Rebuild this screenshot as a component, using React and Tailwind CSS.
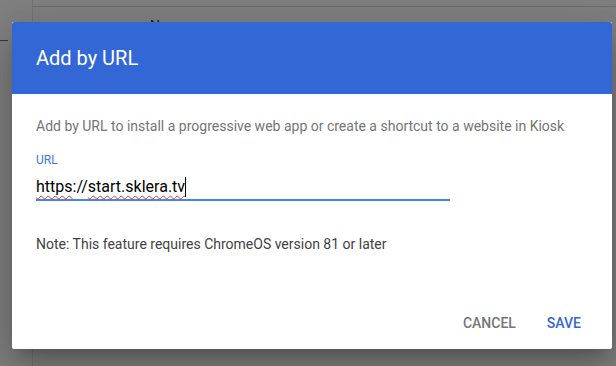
import { useState } from "react";

const AddUrlDialog = () => {
  const [url] = useState("https://start.sklera.tv");

  return (
    <div className="absolute left-[12px] top-[22px] w-[600px] h-[327px] bg-white rounded-[2px] shadow-[0_11px_15px_-7px_rgba(0,0,0,0.2),0_24px_38px_3px_rgba(0,0,0,0.14),0_9px_46px_8px_rgba(0,0,0,0.12)] flex flex-col overflow-hidden">
      <div className="h-[72px] bg-[#3367d6] flex items-center px-6 rounded-t-[2px]">
        <h2 className="text-[20px] text-white leading-6">Add by URL</h2>
      </div>
      <div className="flex-1 flex flex-col px-6 pt-[22px]">
        <p className="text-[14px] leading-5 text-[#757575]">
          Add by URL to install a progressive web app or create a shortcut to a website in Kiosk
        </p>
        <label className="mt-4 text-[12px] leading-4 text-[#3b78e7]">URL</label>
        <div className="mt-[7px] w-[414px] h-[26px] border-b-2 border-[#4285f4] text-[16px] leading-6 text-black flex items-start">
          <span className="underline decoration-wavy decoration-[#e53935] decoration-1 underline-offset-[3px]">https</span>
          <span>://</span>
          <span className="underline decoration-wavy decoration-[#e53935] decoration-1 underline-offset-[3px]">
            {url.replace("https://", "")}
          </span>
          <span className="w-px h-[20px] mt-[2px] bg-black" />
        </div>
        <p className="mt-[33px] text-[14px] leading-5 text-[#424242]">
          Note: This feature requires ChromeOS version 81 or later
        </p>
        <div className="mt-auto -mr-px flex justify-end gap-[15px] pb-2">
          <button className="h-9 px-2 text-[14px] font-medium text-[#757575]">CANCEL</button>
          <button className="h-9 px-2 text-[14px] font-medium text-[#3367d6]">SAVE</button>
        </div>
      </div>
    </div>
  );
};

export default function App() {
  return (
    <div className="relative w-[616px] h-[366px] overflow-hidden bg-[#808080] font-['Roboto',sans-serif]">
      <div className="flex h-full">
        <div className="w-[33px] border-r border-[#737373] flex flex-col">
          <div className="mt-[40px] w-[8px] border-t border-[#3a3a3a]" />
        </div>
        <div className="flex-1 flex flex-col">
          <div className="h-[7px] border-b border-[#6e6e6e]" />
          <div className="pl-[117px] pt-[9px] text-[14px] text-[#111] leading-5">N</div>
        </div>
      </div>
      <AddUrlDialog />
    </div>
  );
}
